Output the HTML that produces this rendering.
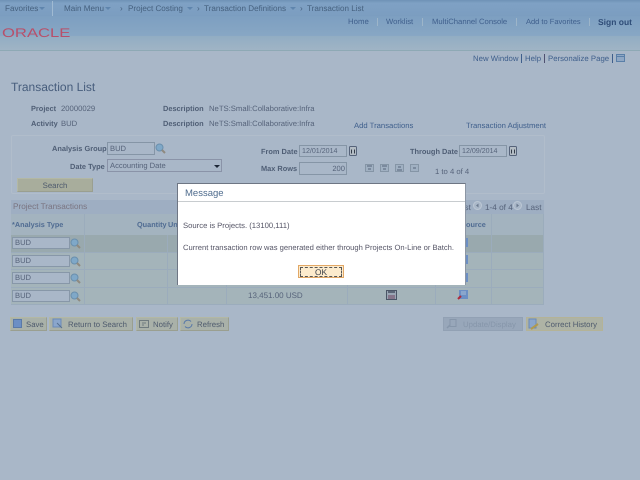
<!DOCTYPE html>
<html>
<head>
<meta charset="utf-8">
<style>
html,body{margin:0;padding:0;width:640px;height:480px;overflow:hidden;background:#a9b7c8;}
body{position:relative;font-family:"Liberation Sans",sans-serif;font-size:7.700px;color:#56637a;text-rendering:geometricPrecision;filter:blur(.25px);}
.t{position:absolute;white-space:nowrap;line-height:10px;}
.b{position:absolute;box-sizing:border-box;}
.l{font-weight:bold;color:#4f5e75;font-size:7.400px;}
.a{color:#3f5f8c;}
.n{color:#46617f;font-size:8.100px;}
.h{font-weight:bold;color:#4f6b92;font-size:7.300px;}
.tri{position:absolute;width:0;height:0;border:3px solid transparent;border-top:3px solid #5f85ad;border-bottom:0;}
.inp{position:absolute;box-sizing:border-box;background:#a9b7c8;border:1px solid #8595a6;color:#56637a;line-height:10px;padding:1px 0 0 2px;font-size:7.600px;height:13px;white-space:nowrap;}
.d{font-size:7.100px;}
.btn{position:absolute;box-sizing:border-box;background:#a9b1a9;border:1px solid #b3b8a4;border-bottom-color:#9a9f90;border-right-color:#9a9f90;color:#4f5b6e;text-align:center;line-height:13px;height:14px;font-size:7.800px;white-space:nowrap;}
svg{position:absolute;overflow:visible;}
</style>
</head>
<body>
<!-- top bars -->
<div class="b" style="left:0;top:0;width:640px;height:16px;background:linear-gradient(#6f92b6,#7fa1c4 20%,#7b9dc0);"></div>
<div class="b" style="left:0;top:16px;width:640px;height:20px;background:linear-gradient(#7d9fc1,#88a7c4);"></div>
<div class="b" style="left:0;top:36px;width:640px;height:14px;background:linear-gradient(#92adc3,#a0b4c5);"></div>
<div class="b" style="left:0;top:50px;width:640px;height:1px;background:#8ea9b5;"></div>
<div class="b" style="left:52px;top:1px;width:1px;height:15px;background:#a0bad2;"></div>
<div class="t n" style="left:5px;top:4px;">Favorites</div>
<div class="tri" style="left:39px;top:7px;"></div>
<div class="t n" style="left:64px;top:4px;">Main Menu</div>
<div class="tri" style="left:105px;top:7px;"></div>
<div class="t n" style="left:120px;top:4px;">›</div>
<div class="t n" style="left:128px;top:4px;">Project Costing</div>
<div class="tri" style="left:187px;top:7px;"></div>
<div class="t n" style="left:197px;top:4px;">›</div>
<div class="t n" style="left:204px;top:4px;">Transaction Definitions</div>
<div class="tri" style="left:290px;top:7px;"></div>
<div class="t n" style="left:300px;top:4px;">›</div>
<div class="t n" style="left:307px;top:4px;">Transaction List</div>
<div class="t" style="left:2px;top:25px;font-size:12.500px;line-height:16px;color:#b8506a;transform:scaleX(1.33);transform-origin:0 50%;">ORACLE</div>

<div class="t a" style="left:348px;top:17px;font-size:7.800px;">Home</div>
<div class="b" style="left:377px;top:18px;width:1px;height:8px;background:#9db5c9;"></div>
<div class="t a" style="left:386px;top:17px;">Worklist</div>
<div class="b" style="left:422px;top:18px;width:1px;height:8px;background:#9db5c9;"></div>
<div class="t a" style="left:432px;top:17px;">MultiChannel Console</div>
<div class="b" style="left:516px;top:18px;width:1px;height:8px;background:#9db5c9;"></div>
<div class="t a" style="left:526px;top:17px;font-size:7.500px;">Add to Favorites</div>
<div class="b" style="left:589px;top:18px;width:1px;height:8px;background:#9db5c9;"></div>
<div class="t" style="left:598px;top:17px;font-weight:bold;color:#2f4d78;font-size:8.500px;">Sign out</div>

<div class="t a" style="left:473px;top:54px;font-size:7.800px;">New Window</div>
<div class="b" style="left:521px;top:54px;width:1px;height:9px;background:#3f5f8c;"></div>
<div class="t a" style="left:525px;top:54px;font-size:7.800px;">Help</div>
<div class="b" style="left:544px;top:54px;width:1px;height:9px;background:#4f5070;"></div>
<div class="t a" style="left:548px;top:54px;font-size:7.800px;">Personalize Page</div>
<div class="b" style="left:612px;top:54px;width:1px;height:9px;background:#3f5f8c;"></div>
<div class="b" style="left:616px;top:54px;width:9px;height:8px;border:1px solid #5a7fa8;background:#8fa7c4;"></div>
<div class="b" style="left:617px;top:56px;width:7px;height:1px;background:#5a7fa8;"></div>

<div class="t" style="left:11px;top:80px;font-size:12px;line-height:14px;color:#475d7c;">Transaction List</div>

<div class="t l" style="left:31px;top:104px;">Project</div>
<div class="t" style="left:61px;top:104px;">20000029</div>
<div class="t l" style="left:163px;top:104px;">Description</div>
<div class="t" style="left:209px;top:104px;">NeTS:Small:Collaborative:Infra</div>
<div class="t l" style="left:31px;top:119px;">Activity</div>
<div class="t" style="left:61px;top:119px;">BUD</div>
<div class="t l" style="left:163px;top:119px;">Description</div>
<div class="t" style="left:209px;top:119px;">NeTS:Small:Collaborative:Infra</div>
<div class="t a" style="left:354px;top:121px;">Add Transactions</div>
<div class="t a" style="left:466px;top:121px;">Transaction Adjustment</div>

<!-- search box -->
<div class="b" style="left:11px;top:135px;width:534px;height:59px;border:1px solid #b1bdcb;border-radius:2px;"></div>
<div class="t l" style="left:52px;top:144px;">Analysis Group</div>
<div class="inp" style="left:107px;top:142px;width:48px;">BUD</div>
<svg style="left:155px;top:143px" width="11" height="11" viewBox="0 0 11 11"><circle cx="4.500" cy="4.500" r="3.500" fill="#7fa8c8" stroke="#6a8fad"/><path d="M7 7l3 3" stroke="#8f8a80" stroke-width="2"/></svg>
<div class="t l" style="left:70px;top:162px;">Date Type</div>
<div class="inp" style="left:107px;top:159px;width:115px;border-color:#8a93a8;">Accounting Date</div>
<div class="b" style="left:214px;top:165px;width:0;height:0;border:3px solid transparent;border-top:3px solid #1d2636;border-bottom:0;"></div>
<div class="btn" style="left:17px;top:178px;width:76px;background:#a8ad9c;">Search</div>

<div class="t l" style="left:261px;top:147px;">From Date</div>
<div class="inp d" style="left:299px;top:145px;width:48px;height:12px;padding-top:0;">12/01/2014</div>
<svg style="left:349px;top:146px" width="8" height="10" viewBox="0 0 8 10"><rect x=".5" y=".5" width="7" height="9" rx="1" fill="#b3bcc4" stroke="#56637a"/><path d="M2.500 3.500v4M5.500 3.500v4" stroke="#333c4a"/></svg>
<div class="t l" style="left:261px;top:164px;">Max Rows</div>
<div class="inp" style="left:299px;top:162px;width:48px;text-align:right;padding-right:1px;">200</div>
<svg style="left:365px;top:164px" width="9" height="8" viewBox="0 0 9 8"><rect x=".5" y=".5" width="8" height="7" fill="#a0b0c2" stroke="#8595a6"/><path d="M2 2h5M3 5h3" stroke="#56637a"/></svg>
<svg style="left:380px;top:164px" width="9" height="8" viewBox="0 0 9 8"><rect x=".5" y=".5" width="8" height="7" fill="#a0b0c2" stroke="#8595a6"/><path d="M2 2h5M3 5h3" stroke="#56637a"/></svg>
<svg style="left:395px;top:164px" width="9" height="8" viewBox="0 0 9 8"><rect x=".5" y=".5" width="8" height="7" fill="#a0b0c2" stroke="#8595a6"/><path d="M3 3h3M2 6h5" stroke="#56637a"/></svg>
<svg style="left:410px;top:164px" width="9" height="8" viewBox="0 0 9 8"><rect x=".5" y=".5" width="8" height="7" fill="#a0b0c2" stroke="#8595a6"/><path d="M3 4h3" stroke="#56637a"/></svg>
<div class="t" style="left:435px;top:167px;">1 to 4 of 4</div>
<div class="t l" style="left:410px;top:147px;">Through Date</div>
<div class="inp d" style="left:459px;top:145px;width:48px;height:12px;padding-top:0;">12/09/2014</div>
<svg style="left:509px;top:146px" width="8" height="10" viewBox="0 0 8 10"><rect x=".5" y=".5" width="7" height="9" rx="1" fill="#b3bcc4" stroke="#56637a"/><path d="M2.500 3.500v4M5.500 3.500v4" stroke="#333c4a"/></svg>

<!-- grid -->
<div class="b" style="left:11px;top:200px;width:533px;height:14px;background:#9eaec2;"></div>
<div class="t" style="left:13px;top:202px;color:#7a7480;font-size:8.200px;">Project Transactions</div>
<div class="t" style="left:455px;top:203px;font-size:8.200px;">First</div>
<svg style="left:473px;top:201px" width="9" height="9" viewBox="0 0 9 9"><circle cx="4.500" cy="4.500" r="4" fill="#a9b7c8" stroke="#bcc7d4"/><path d="M5.500 2.500v4l-2.500-2z" fill="#6b7a8e"/></svg>
<div class="t" style="left:485px;top:203px;font-size:8.200px;">1-4 of 4</div>
<svg style="left:513px;top:201px" width="9" height="9" viewBox="0 0 9 9"><circle cx="4.500" cy="4.500" r="4" fill="#a9b7c8" stroke="#bcc7d4"/><path d="M3.500 2.500v4l2.500-2z" fill="#6b7a8e"/></svg>
<div class="t" style="left:526px;top:203px;font-size:8.200px;">Last</div>

<div class="b" style="left:11px;top:214px;width:533px;height:21px;background:#a3b3bf;"></div>
<div class="t h" style="left:12px;top:220px;">*Analysis Type</div>
<div class="t h" style="left:137px;top:220px;">Quantity</div>
<div class="t h" style="left:168px;top:220px;">Un</div>
<div class="t h" style="left:466px;top:220px;">ource</div>

<div class="b" style="left:11px;top:235px;width:533px;height:17px;background:#99a9ae;"></div>
<div class="b" style="left:11px;top:252px;width:533px;height:53px;background:#a4b4ba;"></div>
<div class="b" style="left:11px;top:252px;width:533px;height:1px;background:#9bacbc;"></div>
<div class="b" style="left:11px;top:269px;width:533px;height:1px;background:#9bacbc;"></div>
<div class="b" style="left:11px;top:287px;width:533px;height:1px;background:#9bacbc;"></div>
<div class="b" style="left:11px;top:304px;width:533px;height:1px;background:#9bacbc;"></div>
<div class="b" style="left:84px;top:214px;width:1px;height:91px;background:#9bacbc;"></div>
<div class="b" style="left:167px;top:235px;width:1px;height:70px;background:#9bacbc;"></div>
<div class="b" style="left:226px;top:235px;width:1px;height:70px;background:#9bacbc;"></div>
<div class="b" style="left:347px;top:235px;width:1px;height:70px;background:#9bacbc;"></div>
<div class="b" style="left:435px;top:235px;width:1px;height:70px;background:#9bacbc;"></div>
<div class="b" style="left:491px;top:214px;width:1px;height:91px;background:#9bacbc;"></div>
<div class="b" style="left:543px;top:214px;width:1px;height:91px;background:#9bacbc;"></div>

<div class="inp" style="left:12px;top:237px;width:58px;height:12px;padding-top:0;border-color:#8797a8;">BUD</div>
<div class="inp" style="left:12px;top:255px;width:58px;height:12px;padding-top:0;border-color:#8797a8;">BUD</div>
<div class="inp" style="left:12px;top:272px;width:58px;height:12px;padding-top:0;border-color:#8797a8;">BUD</div>
<div class="inp" style="left:12px;top:290px;width:58px;height:12px;padding-top:0;border-color:#8797a8;">BUD</div>
<svg style="left:70px;top:238px" width="11" height="11" viewBox="0 0 11 11"><circle cx="4.500" cy="4.500" r="3.500" fill="#7fa8c8" stroke="#6a8fad"/><path d="M7 7l3 3" stroke="#8f8a80" stroke-width="2"/></svg>
<svg style="left:70px;top:256px" width="11" height="11" viewBox="0 0 11 11"><circle cx="4.500" cy="4.500" r="3.500" fill="#7fa8c8" stroke="#6a8fad"/><path d="M7 7l3 3" stroke="#8f8a80" stroke-width="2"/></svg>
<svg style="left:70px;top:273px" width="11" height="11" viewBox="0 0 11 11"><circle cx="4.500" cy="4.500" r="3.500" fill="#7fa8c8" stroke="#6a8fad"/><path d="M7 7l3 3" stroke="#8f8a80" stroke-width="2"/></svg>
<svg style="left:70px;top:291px" width="11" height="11" viewBox="0 0 11 11"><circle cx="4.500" cy="4.500" r="3.500" fill="#7fa8c8" stroke="#6a8fad"/><path d="M7 7l3 3" stroke="#8f8a80" stroke-width="2"/></svg>

<div class="t" style="left:248px;top:291px;font-size:8px;">13,451.00 USD</div>
<svg style="left:386px;top:290px" width="11" height="10" viewBox="0 0 11 10"><rect x=".5" y=".5" width="10" height="9" fill="#9aa6b4" stroke="#4a5566"/><rect x="2" y="1" width="7" height="2" fill="#5a6576"/><rect x="2" y="5" width="7" height="4" fill="#85758a"/></svg>
<svg style="left:458px;top:238px" width="10" height="10" viewBox="0 0 10 10"><rect x="1" y="0" width="9" height="9" fill="#6c8fc4"/></svg>
<svg style="left:458px;top:255px" width="10" height="10" viewBox="0 0 10 10"><rect x="1" y="0" width="9" height="9" fill="#6c8fc4"/></svg>
<svg style="left:458px;top:273px" width="10" height="10" viewBox="0 0 10 10"><rect x="1" y="0" width="9" height="9" fill="#6c8fc4"/></svg>
<svg style="left:458px;top:290px" width="10" height="10" viewBox="0 0 10 10"><rect x="1" y="0" width="9" height="9" fill="#6c8fc4"/><path d="M3 2h5M3 4h5" stroke="#a9bcd6"/><path d="M0 9l3-3" stroke="#b02a3a" stroke-width="2"/></svg>

<!-- footer buttons -->
<div class="btn" style="left:10px;top:317px;width:37px;text-align:left;padding-left:15px;">Save</div>
<div class="b" style="left:13px;top:319px;width:9px;height:9px;background:#6c8fc4;border:1px solid #5a7aa8;"></div>
<div class="btn" style="left:49px;top:317px;width:84px;text-align:left;padding-left:18px;">Return to Search</div>
<svg style="left:52px;top:318px" width="11" height="11" viewBox="0 0 11 11"><rect x="1" y="1" width="8" height="8" fill="#8aa6cc" stroke="#6a8ab8"/><path d="M5 5l5 5" stroke="#56708f"/></svg>
<div class="btn" style="left:136px;top:317px;width:42px;text-align:left;padding-left:16px;">Notify</div>
<svg style="left:139px;top:320px" width="10" height="8" viewBox="0 0 10 8"><rect x=".5" y=".5" width="9" height="7" fill="none" stroke="#6f7b7f"/><path d="M3 3h4M3 5h2" stroke="#6f7b7f"/></svg>
<div class="btn" style="left:180px;top:317px;width:49px;text-align:left;padding-left:16px;">Refresh</div>
<svg style="left:183px;top:319px" width="10" height="10" viewBox="0 0 10 10" fill="none"><path d="M1 5a4 4 0 0 1 7-2.500M9 5a4 4 0 0 1-7 2.500" stroke="#5a7aa8"/></svg>
<div class="btn" style="left:443px;top:317px;width:80px;background:#98a7ba;border-color:#92a1b4;color:#8696aa;text-align:left;padding-left:19px;">Update/Display</div>
<svg style="left:446px;top:319px" width="11" height="10" viewBox="0 0 11 10" fill="none"><rect x="4" y=".5" width="6" height="7" stroke="#8696aa"/><path d="M4 6l-3 3" stroke="#8696aa" stroke-width="1.500"/></svg>
<div class="btn" style="left:526px;top:317px;width:77px;background:#aeb3a5;text-align:left;padding-left:18px;border-color:#b4b397;">Correct History</div>
<svg style="left:528px;top:318px" width="11" height="12" viewBox="0 0 11 12"><rect x="1" y="1" width="7" height="9" fill="#8aa6cc" stroke="#6a8ab8"/><path d="M3 11l7-5" stroke="#b09a50" stroke-width="2"/></svg>

<!-- dialog -->
<div class="b" style="left:177px;top:183px;width:289px;height:102px;background:#fff;border-left:1px solid #6e7684;border-top:1px solid #6e7684;border-right:1px solid #8c96a4;"></div>
<div class="b" style="left:178px;top:201px;width:287px;height:1px;background:#c8cccf;"></div>
<div class="t" style="left:185px;top:188px;font-size:9.500px;line-height:11px;color:#4d6a8c;">Message</div>
<div class="t" style="left:183px;top:221px;color:#555566;">Source is Projects. (13100,111)</div>
<div class="t" style="left:183px;top:243px;color:#555566;font-size:7.600px;">Current transaction row was generated either through Projects On-Line or Batch.</div>
<div class="b" style="left:298px;top:265px;width:46px;height:13px;background:#fcebcd;border:1px solid #e2a866;"></div>
<div class="b" style="left:300px;top:267px;width:42px;height:10px;border:1px dashed #555;"></div>
<div class="t" style="left:298px;top:267px;width:46px;text-align:center;color:#3a3f48;font-size:8.300px;">OK</div>
</body>
</html>
